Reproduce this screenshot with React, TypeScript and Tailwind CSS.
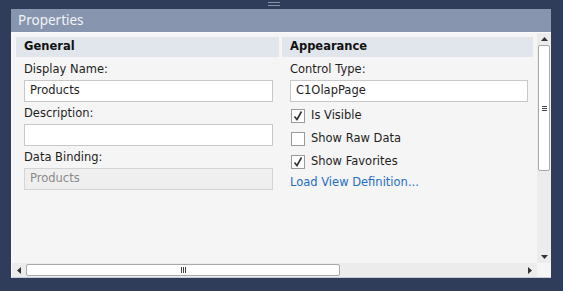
const font = { fontFamily: 'Tahoma, "DejaVu Sans", sans-serif' };

const Field = ({ label, value, disabled }: { label: string; value: string; disabled?: boolean }) => (
  <div className="flex flex-col">
    <div className="h-[22px] pt-[4px] text-[11.5px] text-[#1e1e1e] leading-[14px]">{label}</div>
    <div
      className={`h-[22px] border px-[5px] flex items-center text-[11.5px] ${
        disabled ? 'bg-[#efefef] border-[#d4d4d4] text-[#8a8a8a]' : 'bg-white border-[#c8c8c8] text-[#1e1e1e]'
      }`}
    >
      {value}
    </div>
  </div>
);

const Check = ({ label, checked }: { label: string; checked?: boolean }) => (
  <div className="flex items-center h-[23px] gap-[6px] text-[11.5px] text-[#1e1e1e]">
    <div className="w-[14px] h-[14px] bg-white border border-[#9a9a9a] flex items-center justify-center">
      {checked && (
        <svg width="12" height="12" viewBox="0 0 12 12">
          <path d="M2.5 6.5 L5 9.5 L9.5 1.5" fill="none" stroke="#333" strokeWidth="1.6" />
        </svg>
      )}
    </div>
    <span>{label}</span>
  </div>
);

export default function App() {
  return (
    <div className="w-[563px] h-[291px] bg-[#2f3d5b] relative overflow-hidden" style={font}>
      <div className="absolute left-[268px] top-[2px] w-[12px] flex flex-col gap-[2px]">
        <div className="h-px bg-[#8a94a8]" />
        <div className="h-px bg-[#8a94a8]" />
      </div>
      <div className="ml-[11px] pt-[9px] w-[540px]">
        <div
          className="h-[23px] bg-[#8795ae] text-[#f2f4f7] text-[13.5px] pl-[7px] flex items-center"
          style={{ fontFamily: '"Noto Sans", "Open Sans", sans-serif' }}
        >
          Properties
        </div>
        <div className="h-[246px] bg-[#f5f5f5] border-t border-l border-[#fafafa] border-b-[#c9ccd2] border-b flex flex-col">
          <div className="flex flex-1 min-h-0">
            <div className="flex-1 pl-[4px] pt-[4px] pr-[4px] flex gap-[3px]">
              <div className="w-[263px]">
                <div className="h-[20px] bg-[#e1e5ec] px-[8px] flex items-center text-[11.5px] font-bold text-[#111]">General</div>
                <div className="pl-[8px] pr-[6px] pt-[1px] flex flex-col">
                  <Field label="Display Name:" value="Products" />
                  <Field label="Description:" value="" />
                  <Field label="Data Binding:" value="Products" disabled />
                </div>
              </div>
              <div className="flex-1">
                <div className="h-[20px] bg-[#e1e5ec] px-[8px] flex items-center text-[11.5px] font-bold text-[#111]">Appearance</div>
                <div className="pl-[8px] pr-[5px] pt-[1px] flex flex-col">
                  <Field label="Control Type:" value="C1OlapPage" />
                  <div className="pt-[2px] pl-[1px]">
                    <Check label="Is Visible" checked />
                    <Check label="Show Raw Data" />
                    <Check label="Show Favorites" checked />
                  </div>
                  <div className="text-[11.5px] text-[#1f6fc5] h-[20px] flex items-center">Load View Definition...</div>
                </div>
              </div>
            </div>
            <div className="w-[14px] bg-[#ececec] flex flex-col items-center">
              <div className="h-[12px] flex items-center justify-center">
                <svg width="7" height="4" viewBox="0 0 7 4"><path d="M0 4 L3.5 0 L7 4Z" fill="#333" /></svg>
              </div>
              <div className="w-[12px] h-[126px] bg-white border border-[#a9a9a9] rounded-[2px] flex items-center justify-center">
                <div className="flex flex-col gap-[1px] w-[5px]">
                  <div className="h-px bg-[#444]" />
                  <div className="h-px bg-[#444]" />
                  <div className="h-px bg-[#444]" />
                </div>
              </div>
              <div className="flex-1" />
              <div className="h-[12px] flex items-center justify-center">
                <svg width="7" height="4" viewBox="0 0 7 4"><path d="M0 0 L7 0 L3.5 4Z" fill="#333" /></svg>
              </div>
            </div>
          </div>
          <div className="h-[14px] flex shrink-0">
            <div className="flex-1 bg-[#ececec] flex items-center">
              <div className="w-[14px] flex items-center justify-center">
                <svg width="4" height="7" viewBox="0 0 4 7"><path d="M4 0 L0 3.5 L4 7Z" fill="#333" /></svg>
              </div>
              <div className="w-[314px] h-[12px] bg-white border border-[#a9a9a9] rounded-[2px] flex items-center justify-center gap-[1px]">
                <div className="w-px h-[6px] bg-[#444]" />
                <div className="w-px h-[6px] bg-[#444]" />
                <div className="w-px h-[6px] bg-[#444]" />
              </div>
              <div className="flex-1" />
              <div className="w-[14px] flex items-center justify-center">
                <svg width="4" height="7" viewBox="0 0 4 7"><path d="M0 0 L4 3.5 L0 7Z" fill="#333" /></svg>
              </div>
            </div>
            <div className="w-[14px] bg-[#f5f5f5]" />
          </div>
        </div>
      </div>
    </div>
  );
}
